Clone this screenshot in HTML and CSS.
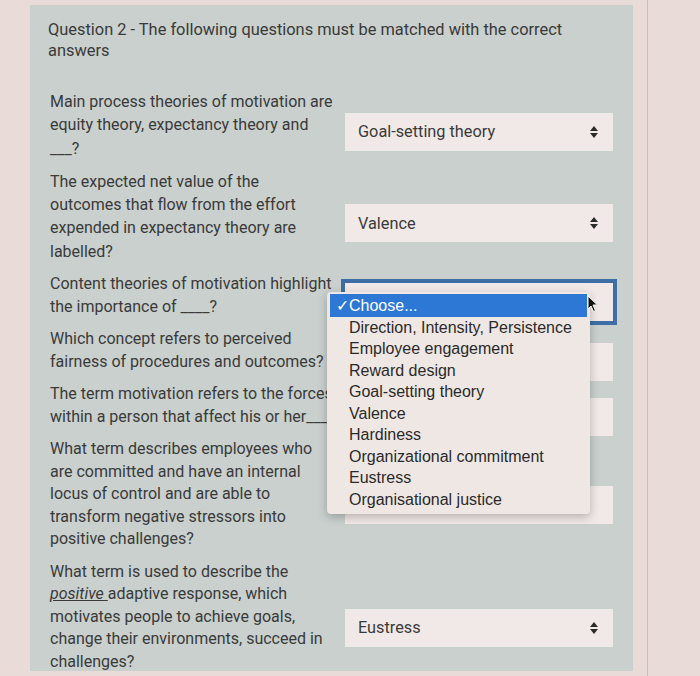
FILE: index.html
```html
<!DOCTYPE html>
<html>
<head>
<meta charset="utf-8">
<link rel="stylesheet" href="styles.css">
</head>
<body>
<div class="frame">
  <div class="panel">
    <div class="title">Question 2 - The following questions must be matched with the correct<br>answers</div>
    <div class="rows">
      <div class="row">
        <div class="q tall">Main process theories of motivation are<br>equity theory, expectancy theory and<br>___?</div>
        <div class="sel"><span>Goal-setting theory</span><svg class="arr" viewBox="0 0 8 12" width="8" height="12"><path d="M4 0 L8 5 L0 5 Z M0 7 L8 7 L4 12 Z" fill="#2b2b2b"/></svg></div>
      </div>
      <div class="row">
        <div class="q tall">The expected net value of the<br>outcomes that flow from the effort<br>expended in expectancy theory are<br>labelled?</div>
        <div class="sel"><span>Valence</span><svg class="arr" viewBox="0 0 8 12" width="8" height="12"><path d="M4 0 L8 5 L0 5 Z M0 7 L8 7 L4 12 Z" fill="#2b2b2b"/></svg></div>
      </div>
      <div class="row">
        <div class="q">Content theories of motivation highlight<br>the importance of ____?</div>
        <div class="sel focus">
          <div class="menu">
            <div class="opt on"><span class="chk">✓</span>Choose...</div>
            <div class="opt">Direction, Intensity, Persistence</div>
            <div class="opt">Employee engagement</div>
            <div class="opt">Reward design</div>
            <div class="opt">Goal-setting theory</div>
            <div class="opt">Valence</div>
            <div class="opt">Hardiness</div>
            <div class="opt">Organizational commitment</div>
            <div class="opt">Eustress</div>
            <div class="opt">Organisational justice</div>
          </div>
          <svg class="cursor" viewBox="0 0 12 18" width="12" height="18"><path d="M1 1 L1 14 L4 11 L6.5 16.5 L8.5 15.5 L6 10 L10.5 10 Z" fill="#111" stroke="#fff" stroke-width="1"/></svg>
        </div>
      </div>
      <div class="row">
        <div class="q">Which concept refers to perceived<br>fairness of procedures and outcomes?</div>
        <div class="sel mid"></div>
      </div>
      <div class="row">
        <div class="q">The term motivation refers to the forces<br>within a person that affect his or her____</div>
        <div class="sel mid"></div>
      </div>
      <div class="row">
        <div class="q">What term describes employees who<br>are committed and have an internal<br>locus of control and are able to<br>transform negative stressors into<br>positive challenges?</div>
        <div class="sel mid"></div>
      </div>
      <div class="row">
        <div class="q">What term is used to describe the<br><em class="ul">positive </em>adaptive response, which<br>motivates people to achieve goals,<br>change their environments, succeed in<br>challenges?</div>
        <div class="sel low"><span>Eustress</span><svg class="arr" viewBox="0 0 8 12" width="8" height="12"><path d="M4 0 L8 5 L0 5 Z M0 7 L8 7 L4 12 Z" fill="#2b2b2b"/></svg></div>
      </div>
    </div>
  </div>
</div>
</body>
</html>
```
FILE: styles.css
```css
html, body {
  margin: 0;
  padding: 0;
}
body {
  background: #e8dbd8;
  font-family: Roboto, "Liberation Sans", sans-serif;
  color: #3a3a3a;
  width: 700px;
  height: 676px;
  overflow: hidden;
}
.frame {
  width: 648px;
  height: 676px;
  border-right: 1px solid #cfbdb9;
  padding: 5px 0 0 30px;
  box-sizing: border-box;
}
.panel {
  width: 603px;
  height: 666px;
  background: #c9d0cd;
  padding: 14px 0 0 18px;
  box-sizing: border-box;
  overflow: hidden;
}
.title {
  font-size: 16.4px;
  line-height: 21px;
  margin-bottom: 29px;
}
.rows {
  display: flex;
  flex-direction: column;
  gap: 10px;
  padding-left: 2px;
}
.row {
  display: flex;
  align-items: center;
  gap: 10px;
}
.q {
  width: 285px;
  flex: none;
  font-size: 16px;
  line-height: 22.5px;
  white-space: nowrap;
}
.q.tall {
  line-height: 23.3px;
}
.ul {
  text-decoration: underline;
}
.sel {
  position: relative;
  width: 268px;
  height: 38px;
  margin: 7px 0 -7px;
  background: #f1e9e7;
  display: flex;
  align-items: center;
  justify-content: space-between;
  padding: 0 15px 0 13px;
  box-sizing: border-box;
  font-size: 16.3px;
}
.sel.mid,
.sel.low {
  margin: 11px 0 -11px;
}
.sel.focus {
  box-shadow: 0 0 0 4px #3d6fa6;
  margin: 6px 0 -6px;
}
.menu {
  position: absolute;
  left: -18px;
  top: 9px;
  width: 263px;
  background: #efe7e4;
  border-radius: 4px;
  box-shadow: 0 3px 10px rgba(0, 0, 0, 0.25);
  padding: 2px 3px 4px;
  box-sizing: border-box;
  font-family: "Liberation Sans", Arial, sans-serif;
  font-size: 16px;
  color: #2a2a2a;
  z-index: 2;
}
.opt {
  height: 21.5px;
  line-height: 21.5px;
  padding-left: 19px;
}
.opt.on {
  height: 23px;
  line-height: 23px;
  background: #2d78d4;
  color: #fff;
  padding-left: 6px;
}
.chk {
  display: inline-block;
  width: 13px;
}
.cursor {
  position: absolute;
  left: 242px;
  top: 12px;
  z-index: 3;
}
```
